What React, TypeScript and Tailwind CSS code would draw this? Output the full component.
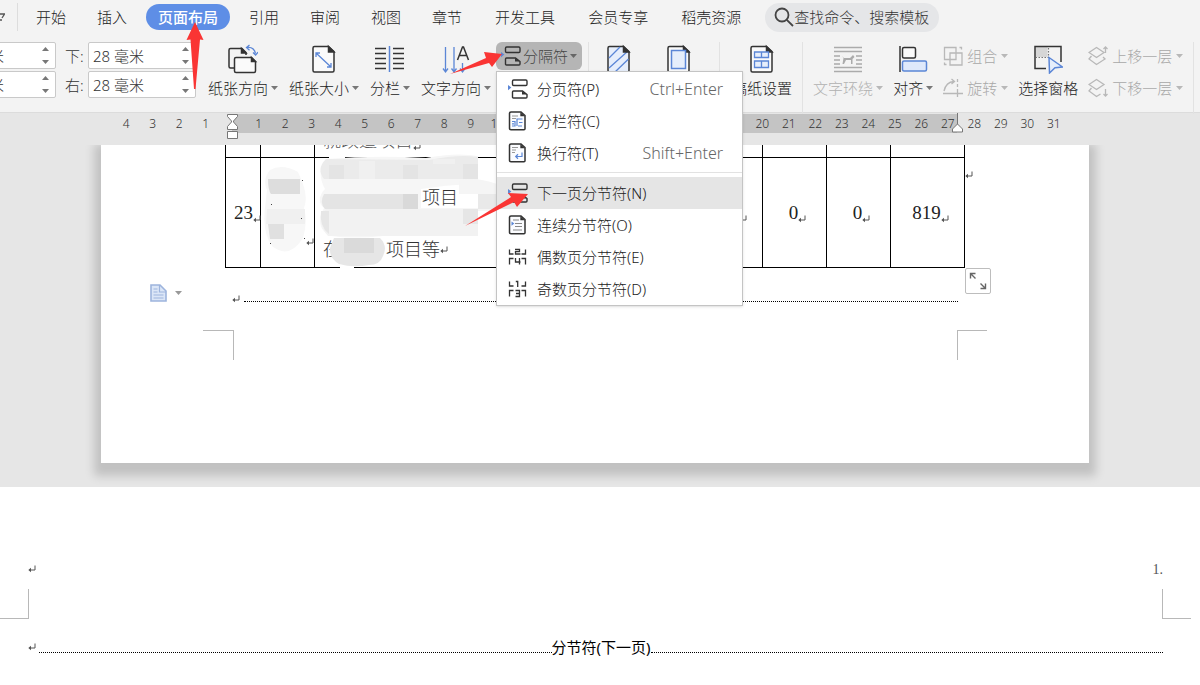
import React, { useState } from 'react';

const tabs = ['开始', '插入', '页面布局', '引用', '审阅', '视图', '章节'];
const extraTabs = ['开发工具', '会员专享', '稻壳资源'];

const rulerMarks = [
  '4', '3', '2', '1', '', '1', '2', '3', '4', '5', '6', '7', '8', '9', '10', '11', '12', '13',
  '14', '15', '16', '17', '18', '19', '20', '21', '22', '23', '24', '25', '26', '27', '28', '29', '30', '31',
];

const pageBreaks = [
  { id: 'page', label: '分页符(P)', shortcut: 'Ctrl+Enter' },
  { id: 'column', label: '分栏符(C)', shortcut: '' },
  { id: 'wrap', label: '换行符(T)', shortcut: 'Shift+Enter' },
];

const sectionBreaks = [
  { id: 'next', label: '下一页分节符(N)' },
  { id: 'continuous', label: '连续分节符(O)' },
  { id: 'even', label: '偶数页分节符(E)' },
  { id: 'odd', label: '奇数页分节符(D)' },
];

function Caret({ className = 'text-[#777777]' }: { className?: string }) {
  return (
    <svg className={`h-1 w-[7px] shrink-0 ${className}`} viewBox="0 0 7 4" fill="currentColor">
      <path d="M0 0h7L3.5 4z" />
    </svg>
  );
}

// Paragraph mark
function Mark() {
  return (
    <svg className="h-2 w-2 shrink-0 text-[#555555]" viewBox="0 0 8 8" fill="none" stroke="currentColor">
      <path d="M7 0.5v4.5H1.5" />
      <path d="M0.3 5L3 2.8v4.4z" fill="currentColor" stroke="none" />
    </svg>
  );
}

function Divider() {
  return <div className="h-[72px] w-px shrink-0 bg-[#e2e2e2]" />;
}

function BreakIcon() {
  return (
    <svg className="h-5 w-5 shrink-0" viewBox="0 0 20 20" fill="none" stroke="#333333" strokeWidth="1.4">
      <rect x="4.5" y="1" width="14.5" height="5.5" rx="1.2" />
      <path d="M4.5 18v-5q0-1 1-1h9l4.500 3.500V18q0 1-1 1h-12.500q-1 0-1-1z" />
      <path d="M14 12v3.5h4.800z" fill="#333333" stroke="none" />
      <path d="M0 6l3.4 2.600L0 11.200z" fill="#5b86d6" stroke="none" />
    </svg>
  );
}

function MenuIcon({ id }: { id: string }) {
  if (id === 'page' || id === 'next') return <BreakIcon />;
  if (id === 'even' || id === 'odd') {
    return (
      <svg className="h-5 w-5 shrink-0" viewBox="0 0 20 20" fill="none" stroke="#333333" strokeWidth="1.3">
        <path d="M1.5 2.500v4.500h4M17.500 2.500v4.500h-4M1.500 17.500v-6h4M17.500 17.500v-6h-4" />
        {id === 'even' ? (
          <path d="M7 2.500h4.500v2.200H7.500v2.300h5M7.500 11v4h5M11.500 11v6.500" />
        ) : (
          <path d="M7.800 2.500h1.900V8M7.500 11.500h4v6h-4M8 14.500h3.500" />
        )}
      </svg>
    );
  }
  return (
    <svg className="h-5 w-5 shrink-0" viewBox="0 0 20 20" fill="none" stroke="#333333" strokeWidth="1.5">
      <path d="M3 1h10l4 3.5v13.200q0 1-1 1H3q-1.500 0-1.500-1.200V2.200Q1.500 1 3 1z" fill="#fbfcff" />
      <path d="M12.300 1v4.300H17z" fill="#333333" stroke="none" />
      {id === 'column' && (
        <g strokeWidth="1.2">
          <path d="M4 5h6M4 7.500h4" stroke="#999999" />
          <path d="M4 10.500h3v4.500H4M9 15V8h5.500M11 11.500h3.500M4 12.800h2M10 15h4" stroke="#5b86d6" />
        </g>
      )}
      {id === 'wrap' && (
        <g strokeWidth="1.2">
          <path d="M4 4.500h6M4 7h4M4 9.500h3" stroke="#999999" />
          <path d="M14 9.500v4H8M10 11.300l-2.300 2.200 2.300 2.200" stroke="#5b86d6" />
        </g>
      )}
      {id === 'continuous' && (
        <g strokeWidth="1.2">
          <path d="M5 5h6M7 8.500h7M7 11.500h7M5 15h9" stroke="#888888" />
          <path d="M3.500 6.500l2.800 2.100-2.800 2.100z" fill="#5b86d6" stroke="none" />
        </g>
      )}
    </svg>
  );
}

function ToolIcon({ id }: { id: string }) {
  const page = 'M5.5 2.500h14l5.500 5v19q0 1.500-1.500 1.500h-18Q4 28 4 26.500V4q0-1.500 1.500-1.500z';
  return (
    <svg className="h-[30px] w-[30px]" viewBox="0 0 30 30" fill="none" stroke="#333333" strokeWidth="1.5">
      {id === 'orientation' && (
        <>
          <path d="M6 24H2.500Q1 24 1 22.500V6q0-1.500 1.500-1.500H14l4 4v2.500" />
          <path d="M13.500 4.500v4.500H18z" fill="#333333" />
          <path d="M8 13.500h15.500l4 4V27q0 1.500-1.500 1.500H8q-1.500 0-1.500-1.500V15q0-1.500 1.500-1.500z" fill="#fafafa" />
          <path d="M23.500 13.500V17.500H27.500z" fill="#333333" />
          <path d="M19 3.500q7-1 8.500 6M21.500 1l-3 2.500 3 2.700M25 8.500l2.600 2.600 2.400-3" stroke="#5b86d6" strokeWidth="1.3" />
        </>
      )}
      {id === 'size' && (
        <>
          <path d={page} fill="#fafafa" />
          <path d="M19.500 2.500V8H25z" fill="#333333" />
          <path d="M7 9l15 14M7 13V9h4M22 19v4h-4" stroke="#5b86d6" strokeWidth="1.3" />
        </>
      )}
      {id === 'columns' && (
        <>
          <path d="M0 4.500h11M0 9.500h11M0 14.500h11M0 19.500h11M0 24.500h11M18 4.500h11M18 9.500h11M18 14.500h11M18 19.500h11M18 24.500h11" />
          <path d="M14.500 2v26" stroke="#5b86d6" />
        </>
      )}
      {id === 'direction' && (
        <>
          <path d="M4.500 3v25M2 24.500L4.500 28 7 24.500M13 3v25M10.500 24.500L13 28l2.500-3.500M21.500 19v9M19 24.500l2.500 3.500 2.500-3.500" stroke="#5b86d6" strokeWidth="1.3" />
          <path d="M16.500 16L21.500 3h1l5 13M18.200 11.500h7.600" />
        </>
      )}
      {id === 'background' && (
        <>
          <path d={page} fill="#e6eefb" />
          <path d="M5 14L16 3M5 24L24 7M11 28l13.500-13" stroke="#5b86d6" strokeWidth="1.3" />
          <path d="M19.500 2.500V8H25z" fill="#333333" />
        </>
      )}
      {id === 'border' && (
        <>
          <path d={page} fill="#fafafa" />
          <path d="M19.500 2.500V8H25z" fill="#333333" />
          <path d="M7.500 6.500h14v18h-14z" fill="#e6eefb" stroke="#5b86d6" />
        </>
      )}
      {id === 'grid' && (
        <>
          <path d={page} fill="#fafafa" />
          <path d="M19.500 2.500V8H25z" fill="#333333" />
          <path d="M7.500 8h14v5.500h-14zM7.500 17h14v6.500h-14zM14.500 8v5.500M14.500 17v6.500" fill="#e6eefb" stroke="#5b86d6" strokeWidth="1.3" />
        </>
      )}
      {id === 'wrapText' && (
        <g stroke="#ababab" strokeWidth="1.3">
          <path d="M1 3.500h28M1 7.500h28M1 12h6M23 12h6M1 16h6M23 16h6M1 20h6M23 20h6M1 23.500h28M1 27.500h28" />
          <path d="M9 12l2 2h6l3-3 1.500 2-2 2v5H18v-4h-5l-2 4H9.500l1-6z" fill="#ababab" stroke="none" />
        </g>
      )}
      {id === 'align' && (
        <>
          <path d="M2 2v26" />
          <rect x="4.500" y="3.500" width="13" height="10.500" rx="1.5" fill="#fafafa" />
          <rect x="4.500" y="17" width="24" height="10" rx="1.5" fill="#dfe9fb" stroke="#5b86d6" />
        </>
      )}
      {id === 'pane' && (
        <>
          <path d="M2.500 3h12v10h-12z" fill="#d6d6d6" stroke="none" />
          <path d="M13 24.500H2v-22h26V18" />
          <path d="M15.500 4v9.500H3" stroke="#777777" strokeDasharray="1.5 1.5" strokeWidth="1.2" />
          <path d="M16 13.500l13.500 9.500-7.500.8-5.500 5.200z" fill="#e6eefb" stroke="#5b86d6" />
        </>
      )}
    </svg>
  );
}

function SmallIcon({ id }: { id: string }) {
  return (
    <svg className="h-5 w-5 shrink-0" viewBox="0 0 20 20" fill="none" stroke="#b8b8b8" strokeWidth="1.3">
      {id === 'group' && (
        <path d="M1.500 1.500H13v12H1.500zM7 7h12v12H7zM16.500 1.500h2v2M1.500 16.500v2h2" />
      )}
      {id === 'rotate' && <path d="M1 13Q3 4 11 3.500M8.500 1l3 2.500-3 2.500M0 15.500h20M14.500 1v3M14.500 6v3M14.500 11v8" />}
      {id === 'forward' && (
        <path d="M1 6.500l7.500-5 7.500 5-7.500 5zM3.500 10L1 13l7.500 5.500L17 13l-2-2M17.500 7V1M15.500 3l2-2 2 2" />
      )}
      {id === 'backward' && (
        <path d="M1 6.500l7.500-5 7.500 5-7.500 5zM3.500 10L1 13l7.500 5.500 4-2.500M17.500 11v7M15.500 16l2 2 2-2" />
      )}
    </svg>
  );
}

function ToolButton({ id, label, caret = false, disabled = false }: { id: string; label: string; caret?: boolean; disabled?: boolean }) {
  return (
    <button
      disabled={disabled}
      className={`flex shrink-0 flex-col items-center pt-[2px] leading-5 ${disabled ? 'text-[#b0b0b0]' : 'text-[#222222]'}`}
    >
      <ToolIcon id={id} />
      <span className="mt-1 flex items-center gap-[3px]">
        {label}
        {caret && <Caret className={disabled ? 'text-[#b8b8b8]' : 'text-[#777777]'} />}
      </span>
    </button>
  );
}

function SmallButton({ id, label }: { id: string; label: string }) {
  return (
    <button disabled className="flex h-7 items-center gap-1 text-[#a8a8a8]">
      <SmallIcon id={id} />
      {label}
      <Caret className="text-[#b8b8b8]" />
    </button>
  );
}

function MarginField({ label, name, value }: { label?: string; name: string; value: string }) {
  const [text, setText] = useState(value);
  return (
    <div className="flex items-center text-[#333333]">
      {label && <label htmlFor={name} className="w-[23px]">{label}</label>}
      <div className="flex h-[27px] w-[108px] items-center rounded-xs border border-[#c9c9c9] bg-white">
        <input
          id={name}
          aria-label={label ? undefined : name}
          value={text}
          onChange={(e) => setText(e.target.value)}
          className="w-full min-w-0 bg-transparent pl-1 outline-none"
        />
        <div className="mr-[6px] flex flex-col gap-[9px]">
          <Caret className="rotate-180 text-[#777777]" />
          <Caret />
        </div>
      </div>
    </div>
  );
}

function BreakMenu() {
  return (
    <div role="menu" className="absolute top-[29px] left-0 z-20 w-[247px] border border-[#c4c4c4] bg-white pt-px shadow-sm">
      {pageBreaks.map((item) => (
        <button key={item.id} role="menuitem" className="flex h-8 w-full items-center gap-[9px] pr-[19px] pl-[11px] text-[#222222] hover:bg-[#e5e5e5]">
          <MenuIcon id={item.id} />
          {item.label}
          <span className="ml-auto text-base text-[#666666]">{item.shortcut}</span>
        </button>
      ))}
      <div className="mt-[3px] mb-1 h-px bg-[#e2e2e2]" />
      {sectionBreaks.map((item) => (
        <button
          key={item.id}
          role="menuitem"
          className={`flex h-8 w-full items-center gap-[9px] pl-[11px] text-[#222222] ${item.id === 'next' ? 'bg-[#e5e5e5]' : 'hover:bg-[#e5e5e5]'}`}
        >
          <MenuIcon id={item.id} />
          {item.label}
        </button>
      ))}
    </div>
  );
}

function TabBar() {
  const [active, setActive] = useState('页面布局');
  const tabClass = (tab: string) =>
    `h-[26px] rounded-full px-3 ${tab === active ? 'bg-[#5e8ee6] font-medium text-white' : 'text-[#222222]'}`;

  return (
    <nav className="flex h-[34px] items-center whitespace-nowrap">
      <svg className="h-2 w-[5px]" viewBox="0 0 5 8" fill="none" stroke="#555555" strokeWidth="1.3">
        <path d="M0 1h4.500L2 5" />
        <path d="M0 7h2" />
      </svg>
      <div className="mr-[6px] ml-3 h-7 w-px bg-[#dddddd]" />
      <div className="flex gap-[7px]">
        {tabs.map((tab) => (
          <button key={tab} onClick={() => setActive(tab)} className={tabClass(tab)}>{tab}</button>
        ))}
      </div>
      <div className="ml-[9px] flex gap-[9px]">
        {extraTabs.map((tab) => (
          <button key={tab} onClick={() => setActive(tab)} className={tabClass(tab)}>{tab}</button>
        ))}
      </div>
      <label className="ml-3 flex h-[29px] w-[174px] items-center rounded-full bg-[#e5e6e8] pl-[9px]">
        <svg className="h-5 w-5 shrink-0" viewBox="0 0 20 20" fill="none" stroke="#444444" strokeWidth="1.8">
          <circle cx="8" cy="8" r="6.500" />
          <path d="M12.800 12.800L19 19" />
        </svg>
        <input
          aria-label="查找命令、搜索模板"
          placeholder="查找命令、搜索模板"
          className="w-full min-w-0 bg-transparent outline-none placeholder:text-[#333333]"
        />
      </label>
    </nav>
  );
}

function Ribbon() {
  const [open, setOpen] = useState(true);
  return (
    <div className="flex h-[79px] items-start border-b border-[#dcdcdc] pt-2 whitespace-nowrap">
      {/* Margins */}
      <div className="mr-[9px] -ml-[52px] flex shrink-0 flex-col gap-[2px]">
        <MarginField name="上" value="37 毫米" />
        <MarginField name="左" value="28 毫米" />
      </div>
      <div className="mr-3 flex shrink-0 flex-col gap-[2px]">
        <MarginField label="下:" name="margin-bottom" value="28 毫米" />
        <MarginField label="右:" name="margin-right" value="28 毫米" />
      </div>

      {/* Page setup */}
      <div className="mr-[5px] flex shrink-0 gap-[11px]">
        <ToolButton id="orientation" label="纸张方向" caret />
        <ToolButton id="size" label="纸张大小" caret />
        <ToolButton id="columns" label="分栏" caret />
        <ToolButton id="direction" label="文字方向" caret />
      </div>
      <div className="relative mr-[6px] shrink-0">
        <button
          onClick={() => setOpen(!open)}
          aria-haspopup="menu"
          aria-expanded={open}
          className="flex h-7 w-[86px] items-center gap-[2px] rounded-md bg-[#b5b5b5] pl-[5px] text-[#444444]"
        >
          <BreakIcon />
          分隔符
          <Caret className="text-[#666666]" />
        </button>
        {open && <BreakMenu />}
      </div>
      <div className="mr-3 flex shrink-0 gap-[10px]">
        <Divider />
        <ToolButton id="background" label="背景" caret />
        <ToolButton id="border" label="页面边框" />
        <Divider />
      </div>

      {/* Arrange */}
      <div className="flex min-w-0 gap-[10px]">
        <ToolButton id="grid" label="稿纸设置" />
        <Divider />
        <ToolButton id="wrapText" label="文字环绕" caret disabled />
        <ToolButton id="align" label="对齐" caret />
        <div className="flex shrink-0 flex-col gap-1">
          <SmallButton id="group" label="组合" />
          <SmallButton id="rotate" label="旋转" />
        </div>
        <ToolButton id="pane" label="选择窗格" />
        <div className="flex shrink-0 flex-col gap-1">
          <SmallButton id="forward" label="上移一层" />
          <SmallButton id="backward" label="下移一层" />
        </div>
        <Divider />
      </div>
    </div>
  );
}

function Ruler() {
  return (
    <div className="relative h-8 pr-[133px] pl-[113px]">
      <div className="absolute top-px right-[243px] left-[232px] h-[19px] bg-[#c4c4c4]" />
      <div className="relative grid h-[22px] auto-cols-fr grid-flow-col items-center text-center text-xs text-[#333333]">
        {rulerMarks.map((mark, i) => (
          <span key={i}>{mark}</span>
        ))}
      </div>
      {/* Indent handles */}
      <svg className="absolute top-0 left-[227px] h-[27px] w-[11px]" viewBox="0 0 11 27" fill="#ffffff" stroke="#777777">
        <path d="M0.500 1.500h10v2L6.500 8v1l4 4.500v3H0.500v-3l4-4.500V8l-4-4.500zM0.500 18.500h10v7H0.500z" />
      </svg>
      <svg className="absolute top-0 right-[237px] h-5 w-[11px]" viewBox="0 0 11 20" fill="#ffffff" stroke="#777777">
        <path d="M5.500 0v11M5.500 11l5 5v3H0.500v-3z" />
      </svg>
    </div>
  );
}

function Redaction() {
  return (
    <svg className="absolute top-0 left-0 h-[124px] w-[272px]" viewBox="0 0 272 124">
      <path d="M45 25q12-7 28 2l5 12q5 14 1 24 4 14-1 30-14 22-31 8-10-14-7-38l2-18q-5-10 3-20z" fill="#f7f7f7" />
      <path d="M43 34h32v15H46q-3-4-3-15z" fill="#dddddd" />
      <path d="M42 64h38v15H41z" fill="#f0f0f0" />
      <path d="M43 79h16v15H45z" fill="#e0e0e0" />
      <path d="M104 9h16v6h-16zM206 9h47v6h-47zM115 119h14v5h-14z" fill="#ffffff" />
      <path d="M101 14q50-4 100-1 30-6 52-2v80h-95q-30 3-52 0-14-6-10-22l3-6q-9-8 1-19-9-16 1-30z" fill="#f6f6f6" />
      <path d="M101 14l103 1q30-6 49-3v22H99q-8-10 2-20z" fill="#ebebeb" />
      <path d="M104 20h15v14h-15zM178 20h15v14h-15zM238 19h15v15h-15z" fill="#e4e4e4" />
      <path d="M134 16h16v18h-16zM208 14h22v5h-22z" fill="#f0f0f0" />
      <path d="M99 49h94v15H100q-6-6-1-15z" fill="#e4e4e4" />
      <path d="M178 49h15v15h-15z" fill="#d9d9d9" />
      <path d="M101 64h152v27H103q-12-14-2-27z" fill="#f2f2f2" />
      <path d="M238 64h15v15h-15zM96 66h8v23q-10-8-8-23z" fill="#e6e6e6" />
      <path d="M196 44q25-4 50-5l7 10v14h-57z" fill="#ffffff" />
      <path d="M234 36q14-5 38 3v27h-19V49h-19z" fill="#f5f5f5" />
      <path d="M253 49h19v15h-19z" fill="#e9e9e9" />
      <path d="M109 93h46q8 8 3 18-3 9-14 9-16 3-30-1-10-6-9-16z" fill="#e6e6e6" />
      <path d="M119 93h30v15h-30z" fill="#dadada" />
      <g fill="#444444">
        <path d="M77 35h1v1h-1zM46 59h1v1h-1zM76 73h1v1h-1zM79 93h1v1h-1zM45 98h1v1h-1z" />
      </g>
    </svg>
  );
}

function DocumentPage() {
  const cell = 'border border-black p-0';
  const numbers = ['0', '0', '12', '0', '0', '819'];
  return (
    <div className="overflow-hidden pb-6">
      <article className="relative mr-[111px] ml-[101px] bg-white px-[124px] pb-[103px] shadow-[0_6px_9px_7px_rgba(0,0,0,0.16)]">
        <div className="relative font-['Liberation_Serif','Noto_Sans_CJK_SC',serif]">
          <table className="w-full table-fixed border-collapse text-[#222222]">
            <colgroup>
              <col className="w-[35px]" />
              <col className="w-[54px]" />
              <col />
              <col className="w-16" />
              <col className="w-16" />
              <col className="w-16" />
              <col className="w-16" />
              <col className="w-16" />
              <col className="w-[74px]" />
            </colgroup>
            <tbody>
              <tr>
                <td className="h-3 border border-t-0 border-black p-0" />
                <td className="border border-t-0 border-black p-0" />
                <td className="border border-t-0 border-black p-0">
                  <div className="flex h-3 items-end overflow-hidden pb-[6px] pl-2 text-lg leading-5 font-light text-[#555555]">
                    就改造项目
                    <Mark />
                  </div>
                </td>
                {numbers.map((_, i) => (
                  <td key={i} className="border border-t-0 border-black p-0" />
                ))}
              </tr>
              <tr>
                <td className={`${cell} h-[110px]`}>
                  <div className="flex items-end pl-2 text-[19px] leading-5">
                    23
                    <Mark />
                  </div>
                </td>
                <td className={cell}>
                  <div className="flex justify-end pt-[58px]">
                    <Mark />
                  </div>
                </td>
                <td className={cell}>
                  <div className="pl-2 text-lg leading-[26px] font-light text-[#333333]">
                    <div className="mt-[22px] h-[26px]" />
                    <div className="h-[26px]" />
                    <div className="flex">
                      在
                      <span className="ml-[45px] flex items-center">
                        项目等
                        <Mark />
                      </span>
                    </div>
                  </div>
                </td>
                {numbers.map((value, i) => (
                  <td key={i} className={cell}>
                    <div className="flex items-end justify-center pl-[6px] text-[19px] leading-5">
                      {value}
                      <Mark />
                    </div>
                  </td>
                ))}
              </tr>
            </tbody>
          </table>
          <Redaction />
          <span className="absolute top-10 left-[197px] text-lg leading-[26px] font-light text-[#333333]">项目</span>
          <span className="absolute top-[26px] left-full">
            <Mark />
          </span>
          <button aria-label="展开表格" className="absolute top-full left-full flex h-[26px] w-[26px] items-center justify-center rounded-xs border border-[#bdbdbd] bg-white">
            <svg className="h-[18px] w-[18px]" viewBox="0 0 18 18" fill="none" stroke="#666666" strokeWidth="1.4">
              <path d="M1.500 6.500v-5h5M1.500 1.500l5 5M16.500 11.500v5h-5M16.500 16.500l-5-5" />
            </svg>
          </button>
        </div>

        <div className="mt-[21px] flex h-5 items-center gap-1 px-[7px]">
          <Mark />
          <div className="mt-1 flex-1 border-t border-dotted border-black" />
        </div>
        <button aria-label="粘贴选项" className="absolute top-[139px] left-[49px] flex items-center gap-2">
          <svg className="h-[18px] w-[17px]" viewBox="0 0 17 18" fill="#dbe6f7" stroke="#9db4dd" strokeWidth="1.6">
            <path d="M1 1h9l6 6v10H1z" />
            <path d="M9.500 1v7H16M3.500 5h4M3.500 8h4M3.500 11h10M3.500 14h10" fill="none" strokeWidth="1.2" />
          </svg>
          <Caret className="text-[#999999]" />
        </button>

        {/* Margin corners */}
        <div className="-mx-[22px] mt-[21px] flex justify-between">
          <div className="h-[30px] w-[31px] border-t border-r border-[#b8b8b8]" />
          <div className="h-[30px] w-[30px] border-t border-l border-[#b8b8b8]" />
        </div>
      </article>
    </div>
  );
}

function NextPage() {
  return (
    <article className="flex-1 bg-white pt-[72px]">
      <div className="flex h-5 items-center justify-between pr-[37px] pl-7">
        <Mark />
        <span className="pt-[2px] font-['Liberation_Serif',serif] text-sm text-[#555555]">1.</span>
      </div>
      <div className="mt-[10px] flex justify-between pr-[9px]">
        <div className="h-[30px] w-[29px] border-r border-b border-[#b8b8b8]" />
        <div className="h-[30px] w-[29px] border-b border-l border-[#b8b8b8]" />
      </div>
      <div className="mt-[18px] flex h-5 items-center pr-[37px] pl-7 text-black">
        <Mark />
        <div className="mt-[10px] ml-[3px] flex-1 border-t border-dotted border-black" />
        <span className="font-normal">分节符(下一页)</span>
        <div className="mt-[10px] flex-1 border-t border-dotted border-black" />
      </div>
    </article>
  );
}

// Red arrows drawn over the window
function Pointers() {
  return (
    <svg className="pointer-events-none absolute top-0 left-0 z-30 h-[240px] w-[540px]" viewBox="0 0 540 240" fill="#fa3534">
      <path d="M195 22l8.500 18-3.500-.5L195.500 89H194L190.500 39.500l-4 .5z" />
      <path d="M450 74l36-16-2-6 18 2-10 13-3-4z" />
      <path d="M465 226l46-29-3-4 20 1-11 13-3-5z" />
    </svg>
  );
}

export default function App() {
  return (
    <div className="relative flex min-h-screen flex-col overflow-hidden bg-[#e6e6e6] font-['Noto_Sans','Noto_Sans_CJK_SC',sans-serif] text-[15px] leading-5 font-light">
      <header className="bg-[#f3f3f3]">
        <TabBar />
        <Ribbon />
      </header>
      <Ruler />
      <DocumentPage />
      <NextPage />
      <Pointers />
    </div>
  );
}
